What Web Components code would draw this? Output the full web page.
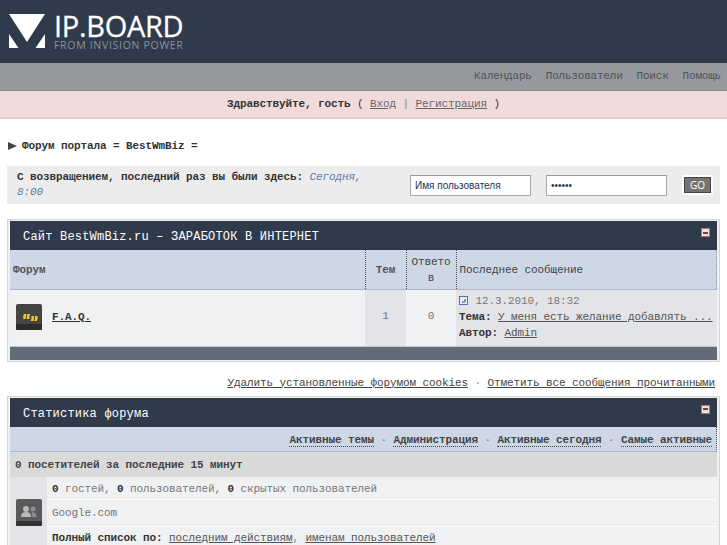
<!DOCTYPE html>
<html lang="ru">
<head>
<meta charset="utf-8">
<title>Форум портала = BestWmBiz =</title>
<style>
html, body { margin: 0; padding: 0; background: #fff; height: 545px; overflow: hidden; }
body { font: 11px "Liberation Mono", monospace; letter-spacing: -0.1px; color: #1c2837; }
ipb-links + ipb-box { margin-top: 7px; }
</style>
</head>
<body>
<ipb-header></ipb-header>
<ipb-crumb>Форум портала = BestWmBiz =</ipb-crumb>
<ipb-login></ipb-login>
<ipb-box title="Сайт BestWmBiz.ru – ЗАРАБОТОК В ИНТЕРНЕТ"><forum-table></forum-table></ipb-box>
<ipb-links></ipb-links>
<ipb-box title="Статистика форума"><forum-stats></forum-stats></ipb-box>

<script>
const common = `
a { color: #555; text-decoration: underline; }
`;

class IpbHeader extends HTMLElement {
  constructor() {
    super();
    this.attachShadow({ mode: "open" }).innerHTML = `
<style>
${common}
:host { display: block; }
.brand { height: 63px; background: #2f3a4a; display: flex; align-items: flex-start; padding: 13px 0 0 9px; box-sizing: border-box; gap: 9px; }
.brand svg { flex: none; margin-top: 1px; }
.logo { font-family: "Open Sans", sans-serif; color: #fff; letter-spacing: 0; }
.logo b { display: block; font-weight: 400; font-size: 29px; line-height: 25px; letter-spacing: -0.3px; -webkit-text-stroke: 0.3px #fff; }
.logo span { display: block; font-size: 10.5px; line-height: 12px; color: #8a929c; letter-spacing: 0.7px; margin-top: 1px; }
nav { height: 28px; background: #95999d; border-bottom: 1px solid #8b8f93; box-sizing: border-box; display: flex; justify-content: flex-end; align-items: center; gap: 14px; padding: 0 6px 2px 0; color: #4f5358; letter-spacing: -0.2px; }
.hello { height: 28px; line-height: 27px; background: #f1dada; border-bottom: 2px solid #e8cccc; box-sizing: border-box; text-align: center; color: #333; white-space: pre; }
.hello b { font-weight: 700; }
.hello a { color: #666; }
.hello i { font-style: normal; color: #888; }
</style>
<div class="brand">
  <svg width="36" height="34" viewBox="0 0 36 34"><path fill="#fff" d="M0 0H36L18 28Z"/><path fill="#fff" d="M0 20L9.5 34H0Z"/><path fill="#fff" d="M36 20V34H26.5Z"/></svg>
  <div class="logo"><b>IP.BOARD</b><span>FROM INVISION POWER</span></div>
</div>
<nav><span>Календарь</span><span>Пользователи</span><span>Поиск</span><span>Помощь</span></nav>
<div class="hello"><b>Здравствуйте, гость</b> ( <a>Вход</a> <i>|</i> <a>Регистрация</a> )</div>`;
  }
}

class IpbCrumb extends HTMLElement {
  constructor() {
    super();
    this.attachShadow({ mode: "open" }).innerHTML = `
<style>
:host { display: flex; align-items: center; gap: 5px; margin: 21px 0 0 8px; height: 12px; font-weight: 700; color: #333; }
i { width: 0; height: 0; border-left: 9px solid #444; border-top: 4px solid transparent; border-bottom: 4px solid transparent; }
</style>
<i></i><span><slot></slot></span>`;
  }
}

class IpbLogin extends HTMLElement {
  constructor() {
    super();
    this.attachShadow({ mode: "open" }).innerHTML = `
<style>
:host { display: flex; margin: 14px 7px 0 7px; height: 38px; background: #ececec; align-items: center; box-sizing: border-box; padding-left: 10px; }
.msg { width: 393px; box-sizing: border-box; padding: 0 40px 1px 0; line-height: 15px; font-weight: 700; color: #333; }
.msg em { font-weight: 400; color: #5a7ba8; }
.field { box-sizing: border-box; width: 121px; height: 21px; background: #fff; border: 1px solid #a9a9a9; border-top-color: #9a9a9a; color: #1d3652; font: 10px "Liberation Sans", sans-serif; letter-spacing: 0; display: flex; align-items: center; padding-left: 4px; }
.field + .field { margin-left: 15px; }
.go { margin-left: 15px; width: 31px; height: 20px; box-sizing: border-box; background: #fff; padding: 2px; display: flex; }
.go span { flex: 1; background: #747474; border: 1px solid #444; color: #fff; font: 10px "Open Sans", sans-serif; letter-spacing: 0; display: flex; align-items: center; justify-content: center; }
</style>
<div class="msg">С возвращением, последний раз вы были здесь: <em>Сегодня, 8:00</em></div>
<div class="field">Имя пользователя</div>
<div class="field">••••••</div>
<div class="go"><span>GO</span></div>`;
  }
}

class IpbBox extends HTMLElement {
  constructor() {
    super();
    this.attachShadow({ mode: "open" }).innerHTML = `
<style>
:host { display: block; margin: 15px 7px 0 7px; border: 1px solid #d5d5d5; padding: 1px 2px 1px 2px; background: #f0f0f0; }
h2 { position: relative; margin: 0; height: 29px; background: #2f3a4a; color: #fff; font: 400 12px/32px "Liberation Mono", monospace; letter-spacing: 0.2px; padding-left: 13px; }
h2 i { position: absolute; right: 7px; top: 7px; width: 9px; height: 9px; box-sizing: border-box; background: #f1dede; border: 1px solid #a87878; display: flex; align-items: center; justify-content: center; }
h2 i::after { content: ""; width: 5px; height: 2px; background: #8a3a3a; }
</style>
<h2><span class="t"></span><i></i></h2>
<slot></slot>`;
    this.shadowRoot.querySelector(".t").textContent = this.getAttribute("title");
    this.removeAttribute("title");
  }
}

class ForumTable extends HTMLElement {
  constructor() {
    super();
    this.attachShadow({ mode: "open" }).innerHTML = `
<style>
${common}
:host { display: block; }
table { width: 100%; border-collapse: collapse; table-layout: fixed; }
th { height: 39px; padding: 0; background: #cdd7e5; border-bottom: 1px solid #a9b5c8; border-right: 1px dotted #4a5568; font-weight: 400; color: #444; line-height: 16px; }
th:first-child { text-align: left; padding-left: 3px; font-weight: 700; color: #555; }
th:last-child { text-align: left; padding-left: 3px; border-right: 1px dotted #8b98ad; }
th.n { font-weight: 700; color: #555; }
th.w { word-break: break-all; padding: 0 3px; }
td { height: 57px; padding: 0; color: #777; box-sizing: border-box; }
.name { background: #f0f1f3; padding-bottom: 3px; }
.name div { display: flex; align-items: center; gap: 10px; padding-left: 6px; }
.name a { font-weight: 700; color: #333; }
.num { text-align: center; background: #e3e4e8; padding-bottom: 4px; }
.num.b { background: #f0f1f3; }
.last { background: #e3e4e8; padding: 0 0 2px 3px; line-height: 16px; color: #777; white-space: nowrap; overflow: hidden; }
.last b { color: #333; }
.last svg { vertical-align: -1px; margin-right: 1px; }
tfoot td { height: 13px; background: #626c79; border-top: 1px solid #c5c8cc; }
</style>
<table>
<colgroup><col style="width:355px"><col style="width:41px"><col style="width:50px"><col></colgroup>
<thead><tr><th>Форум</th><th class="n">Тем</th><th class="w">Ответов</th><th>Последнее сообщение</th></tr></thead>
<tbody><tr>
<td class="name"><div>
<svg width="26" height="26" viewBox="0 0 26 26"><rect width="26" height="26" rx="2" fill="#444"/><rect y="20" width="26" height="6" rx="1" fill="#2b2b2b"/><path fill="#f4c81e" d="M8 10h2.6l-.8 2v3H7.2v-3zM11.6 10h2.6l-.8 2v3h-2.6v-3zM15.4 12h2.6v3l-.8 2h-2.6l.8-2zM19 12h2.6v3l-.8 2h-2.6l.8-2z"/></svg>
<a>F.A.Q.</a></div></td>
<td class="num">1</td>
<td class="num b">0</td>
<td class="last">
<svg width="9" height="9" viewBox="0 0 9 9"><rect x=".5" y=".5" width="8" height="8" fill="#e8eef8" stroke="#4a74b5"/><path d="M3 6H6V3" fill="none" stroke="#2a4f8a"/></svg> 12.3.2010, 18:32<br>
<b>Тема:</b> <a>У меня есть желание добавлять ...</a><br>
<b>Автор:</b> <a>Admin</a></td>
</tr></tbody>
<tfoot><tr><td colspan="4"></td></tr></tfoot>
</table>`;
  }
}

class IpbLinks extends HTMLElement {
  constructor() {
    super();
    this.attachShadow({ mode: "open" }).innerHTML = `
<style>
${common}
:host { display: block; margin: 15px 12px 0 0; height: 12px; line-height: 12px; text-align: right; color: #888; }
a { color: #444; }
</style>
<a>Удалить установленные форумом cookies</a> · <a>Отметить все сообщения прочитанными</a>`;
  }
}

class ForumStats extends HTMLElement {
  constructor() {
    super();
    this.attachShadow({ mode: "open" }).innerHTML = `
<style>
${common}
:host { display: block; }
.tabs { height: 25px; line-height: 26px; background: #cdd7e5; border-bottom: 1px solid #a9b5c8; border-right: 1px dotted #4a5568; box-sizing: border-box; text-align: right; padding-right: 4px; color: #777; white-space: pre; }
.tabs a { font-weight: 700; color: #444; text-decoration: none; border-bottom: 1px dotted #444; }
.head { height: 25px; background: #dadada; line-height: 27px; padding-left: 5px; font-weight: 700; color: #444; }
.body { display: flex; }
.ico { width: 37px; flex: none; background: #e3e4e8; display: flex; justify-content: center; padding-top: 22px; box-sizing: border-box; }
.rows { flex: 1; background: #f0f1f3; }
.rows div { height: 27px; line-height: 26px; padding-left: 5px; border-bottom: 1px solid #fff; box-sizing: border-box; color: #777; }
.rows div:first-child { height: 23px; line-height: 25px; }
.rows div:last-child { line-height: 23px; }
.rows b { color: #333; }
</style>
<div class="tabs"><a>Активные темы</a> · <a>Администрация</a> · <a>Активные сегодня</a> · <a>Самые активные</a></div>
<div class="head">0 посетителей за последние 15 минут</div>
<div class="body">
<div class="ico"><svg width="26" height="27" viewBox="0 0 26 27"><rect width="26" height="27" rx="2" fill="#5a5a5a"/><rect y="22" width="26" height="5" rx="1" fill="#333"/><circle cx="10" cy="10" r="3" fill="#b9b9b9"/><path d="M5 18q0-5 5-5t5 5z" fill="#b9b9b9"/><circle cx="17" cy="10" r="2.5" fill="#8f8f8f"/><path d="M15.5 13q5 0 5 5h-4z" fill="#8f8f8f"/></svg></div>
<div class="rows">
<div><b>0</b> гостей, <b>0</b> пользователей, <b>0</b> скрытых пользователей</div>
<div>Google.com</div>
<div><b>Полный список по:</b> <a>последним действиям</a>, <a>именам пользователей</a></div>
</div></div>`;
  }
}

customElements.define("ipb-header", IpbHeader);
customElements.define("ipb-crumb", IpbCrumb);
customElements.define("ipb-login", IpbLogin);
customElements.define("ipb-box", IpbBox);
customElements.define("forum-table", ForumTable);
customElements.define("ipb-links", IpbLinks);
customElements.define("forum-stats", ForumStats);
</script>
</body>
</html>
